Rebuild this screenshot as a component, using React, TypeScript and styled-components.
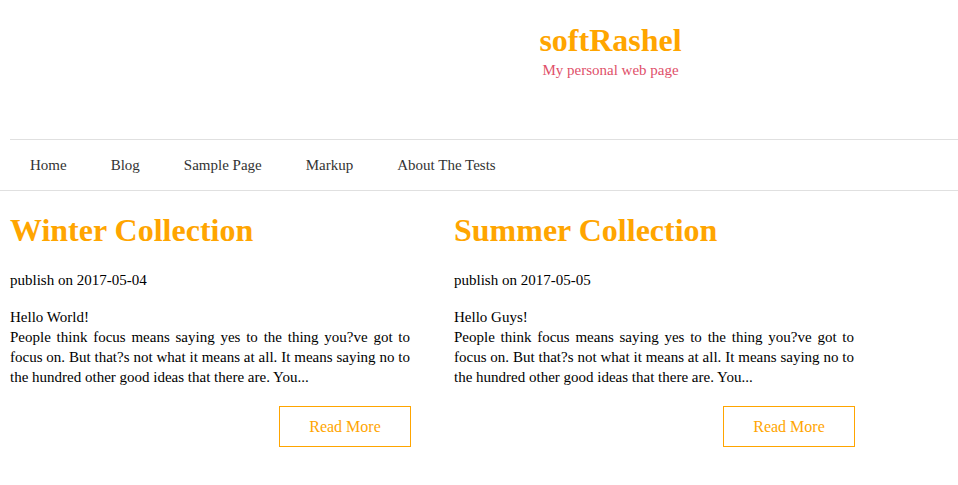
import React from "react";
import styled, { createGlobalStyle } from "styled-components";

const Global = createGlobalStyle`
  html, body { margin: 0; padding: 0; background: #fff; }
  body { font-family: "Liberation Serif", "Times New Roman", serif; color: #000; }
`;

const Page = styled.div`
  width: 958px;
`;

const Header = styled.header`
  display: flex;
  flex-direction: column;
  align-items: center;
  padding: 22px 0 0 263px;
  height: 139px;
  box-sizing: border-box;
`;

const SiteTitle = styled.h1`
  margin: 0;
  font-size: 32px;
  font-weight: bold;
  color: #ffa500;
  line-height: 36px;
`;

const Tagline = styled.p`
  margin: 2px 0 0;
  font-size: 15px;
  color: #e0506a;
  line-height: 20px;
`;

const Nav = styled.nav`
  margin-left: 10px;
  border-top: 1px solid #e0e0e0;
  display: flex;
  height: 50px;
  align-items: center;
  padding-left: 20px;
  gap: 44px;
`;

const NavLink = styled.a`
  font-size: 15px;
  color: #333;
  text-decoration: none;
`;

const Divider = styled.div`
  border-top: 1px solid #e0e0e0;
`;

const Posts = styled.main`
  display: grid;
  grid-template-columns: 400px 400px;
  column-gap: 44px;
  padding: 14px 10px 0;
`;

const Post = styled.article`
  display: flex;
  flex-direction: column;
`;

const PostTitle = styled.h2`
  margin: 0;
  font-size: 32px;
  font-weight: bold;
  color: #ffa500;
  line-height: 50px;
`;

const Meta = styled.p`
  margin: 15px 0 0;
  font-size: 15px;
  line-height: 20px;
`;

const Body = styled.p`
  margin: 17px 0 0;
  font-size: 15px;
  line-height: 20px;
  text-align: justify;
`;

const ButtonRow = styled.div`
  display: flex;
  justify-content: flex-end;
  margin: 19px -1px 0 0;
`;

const ReadMore = styled.a`
  display: flex;
  align-items: center;
  justify-content: center;
  width: 132px;
  height: 41px;
  box-sizing: border-box;
  border: 1px solid #ffa500;
  color: #ffa500;
  font-size: 16px;
  text-decoration: none;
`;

const posts = [
  { title: "Winter Collection", date: "2017-05-04", greet: "Hello World!" },
  { title: "Summer Collection", date: "2017-05-05", greet: "Hello Guys!" },
];

const text =
  "People think focus means saying yes to the thing you?ve got to focus on. But that?s not what it means at all. It means saying no to the hundred other good ideas that there are. You...";

export default function App() {
  return (
    <Page>
      <Global />
      <Header>
        <SiteTitle>softRashel</SiteTitle>
        <Tagline>My personal web page</Tagline>
      </Header>
      <Nav>
        {["Home", "Blog", "Sample Page", "Markup", "About The Tests"].map((n) => (
          <NavLink key={n} href="#">{n}</NavLink>
        ))}
      </Nav>
      <Divider />
      <Posts>
        {posts.map((p) => (
          <Post key={p.title}>
            <PostTitle>{p.title}</PostTitle>
            <Meta>publish on {p.date}</Meta>
            <Body>
              {p.greet}
              <br />
              {text}
            </Body>
            <ButtonRow>
              <ReadMore href="#">Read More</ReadMore>
            </ButtonRow>
          </Post>
        ))}
      </Posts>
    </Page>
  );
}
